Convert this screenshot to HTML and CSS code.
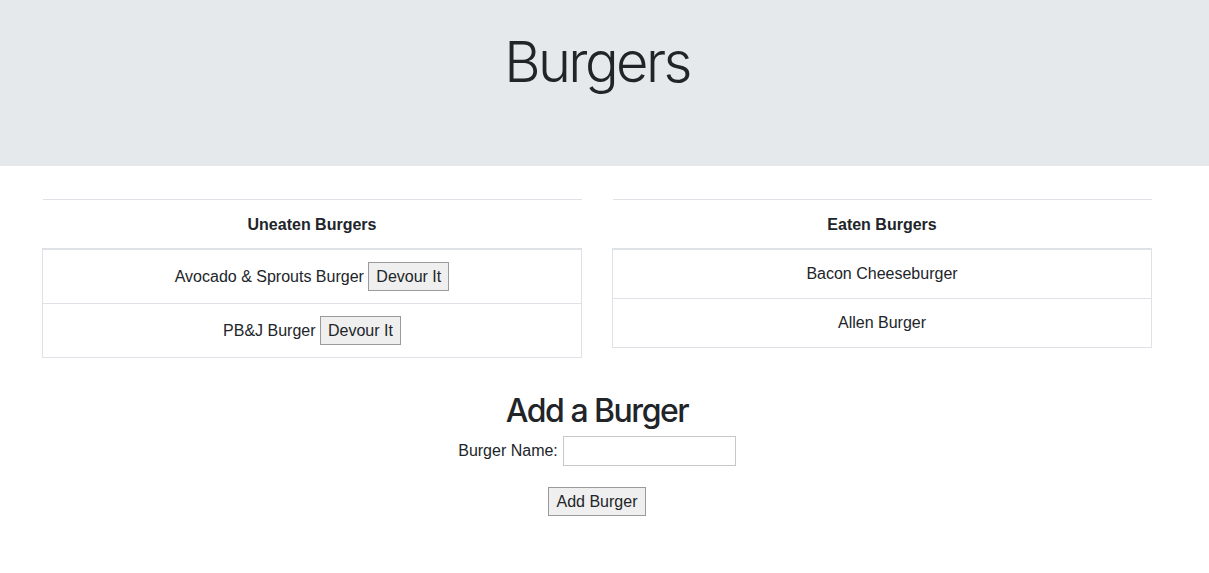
FILE: index.html
```html
<!DOCTYPE html>
<html lang="en">
<head>
<meta charset="utf-8">
<title>Burgers</title>
<link rel="stylesheet" href="styles.css">
</head>
<body>
<header class="jumbotron">
  <h1 class="display">Burgers</h1>
</header>
<main class="page">
  <div class="container">
    <div class="row">
      <div class="col">
        <table class="burger-table">
          <thead><tr><th>Uneaten Burgers</th></tr></thead>
          <tbody>
            <tr><td>Avocado &amp; Sprouts Burger <button class="btn">Devour It</button></td></tr>
            <tr><td>PB&amp;J Burger <button class="btn">Devour It</button></td></tr>
          </tbody>
        </table>
      </div>
      <div class="col">
        <table class="burger-table">
          <thead><tr><th>Eaten Burgers</th></tr></thead>
          <tbody>
            <tr><td>Bacon Cheeseburger</td></tr>
            <tr><td>Allen Burger</td></tr>
          </tbody>
        </table>
      </div>
    </div>
    <section class="add-form">
      <h2 class="add-title">Add a Burger</h2>
      <form class="form">
        <div class="field"><label for="bn">Burger Name:</label> <input id="bn" class="text-input" type="text"></div>
        <button class="btn btn-add" type="button">Add Burger</button>
      </form>
    </section>
  </div>
</main>
</body>
</html>
```
FILE: styles.css
```css
html, body {
  margin: 0;
  padding: 0;
}
body {
  font-family: "Liberation Sans", Arial, sans-serif;
  font-size: 16px;
  line-height: 24px;
  color: #212529;
  background: #fff;
}
.jumbotron {
  background: #e5e9ec;
  height: 166px;
  box-sizing: border-box;
  padding: 29px 15px 0 0;
  margin-bottom: 33px;
  text-align: center;
}
.display {
  margin: 0;
  font-family: Inter, "Liberation Sans", sans-serif;
  font-size: 56px;
  font-weight: 300;
  line-height: 67.2px;
  letter-spacing: -2.6px;
}
.page {
  padding-right: 15px;
}
.container {
  max-width: 1140px;
  margin: 0 auto;
  padding: 0 15px;
  box-sizing: border-box;
}
.row {
  display: flex;
  gap: 30px;
  align-items: flex-start;
}
.col {
  flex: 1 1 0;
  min-width: 0;
}
.burger-table {
  width: 100%;
  border-collapse: collapse;
  text-align: center;
}
.burger-table th {
  font-weight: bold;
  padding: 13px 12px 11px;
  border-top: 1px solid #dee2e6;
  border-bottom: 2px solid #dee2e6;
}
.burger-table td {
  padding: 12px;
  border: 1px solid #dee2e6;
}
.btn {
  font: inherit;
  line-height: 24px;
  color: #212529;
  background: #efefef;
  border: 1px solid #9a9a9a;
  border-radius: 0;
  padding: 2px 7px 1px;
  margin: 0;
}
.btn-add {
  padding: 2px 8px 1px;
}
.add-form {
  text-align: center;
  margin-top: 34px;
}
.add-title {
  margin: 0 0 6px;
  font-family: Inter, "Liberation Sans", sans-serif;
  font-size: 32px;
  font-weight: 500;
  line-height: 38.4px;
  letter-spacing: -1.5px;
}
.form {
  display: flex;
  flex-direction: column;
  align-items: center;
  gap: 21px;
}
.field {
  display: flex;
  align-items: center;
  gap: 5px;
}
.text-input {
  width: 173px;
  height: 30px;
  box-sizing: border-box;
  border: 1px solid #c8c8c8;
  padding: 1px 2px;
  font: inherit;
  margin: 0;
}
```
